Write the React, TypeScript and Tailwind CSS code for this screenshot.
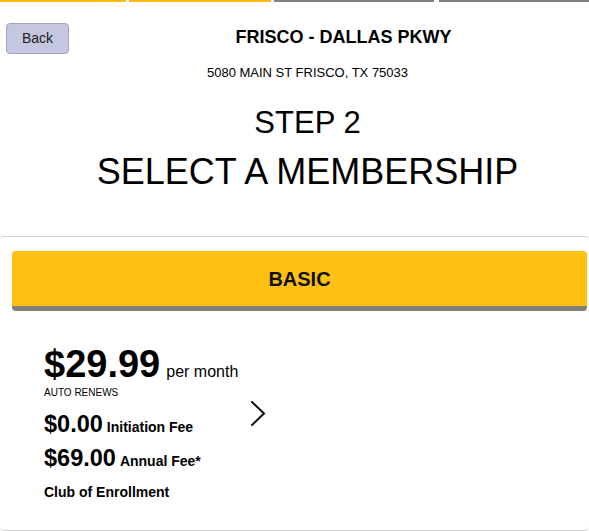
export default function App() {
  return (
    <div className="w-full min-h-[531px] bg-white text-black font-['Liberation_Sans',Arial,sans-serif] overflow-hidden">
      {/* Progress steps */}
      <div className="flex h-[2px]">
        <div className="w-[126px] bg-[#fdbd16]" />
        <div className="w-[142px] ml-[3px] bg-[#fdbd16]" />
        <div className="w-[160px] ml-[3px] bg-[#808080]" />
        <div className="flex-1 ml-[5px] bg-[#808080]" />
      </div>

      {/* Header */}
      <div className="flex mt-[21px]">
        <div className="w-[98px] pl-[6px]">
          <button className="w-[63px] h-[31px] rounded-[4px] border border-[#a3a4c4] bg-[#c5c6e0] text-[14px] text-[#222]">
            Back
          </button>
        </div>
        <h1 className="flex-1 text-center font-bold text-[18px] leading-[20px] pt-[4px]">
          FRISCO - DALLAS PKWY
        </h1>
      </div>

      <div className="pl-[26px] text-center">
        <p className="mt-[11px] text-[13px] leading-[16px]">5080 MAIN ST FRISCO, TX 75033</p>
        <h2 className="mt-[24px] text-[31px] leading-[36px]">STEP 2</h2>
        <h2 className="mt-[11px] text-[36px] leading-[40px]">SELECT A MEMBERSHIP</h2>
      </div>

      {/* Membership card */}
      <div className="mt-[44px] border-y border-[#d2d2d2] rounded-[4px] pt-[14px] pb-[30px]">
        <div className="ml-[12px] mr-[2px] h-[60px] rounded-[4px] bg-[#fec013] border-b-[5px] border-[#7f7f78] flex items-center justify-center">
          <span className="font-bold text-[20px] text-[#111]">BASIC</span>
        </div>

        <div className="flex pl-[44px] mt-[34px]">
          <div>
            <div className="flex items-baseline">
              <span className="font-bold text-[38px] leading-[38px]">$29.99</span>
              <span className="ml-[6px] text-[16px]">per month</span>
            </div>
            <p className="mt-[3px] text-[10px] leading-[12px]">AUTO RENEWS</p>
            <div className="mt-[11px] flex items-baseline h-[28px]">
              <span className="font-bold text-[23.5px] leading-[28px]">$0.00</span>
              <span className="ml-[4px] font-bold text-[14px]">Initiation Fee</span>
            </div>
            <div className="mt-[6px] flex items-baseline h-[28px]">
              <span className="font-bold text-[23.5px] leading-[28px]">$69.00</span>
              <span className="ml-[4px] font-bold text-[14px]">Annual Fee*</span>
            </div>
            <p className="mt-[12px] font-bold text-[14px] leading-[16px]">Club of Enrollment</p>
          </div>
          <svg className="ml-[11px] mt-[55px]" width="18" height="28" viewBox="0 0 18 28" fill="none">
            <polyline points="3,2 15,13.5 3,25" stroke="#111" strokeWidth="2" strokeLinecap="round" strokeLinejoin="miter" />
          </svg>
        </div>
      </div>
    </div>
  )
}
